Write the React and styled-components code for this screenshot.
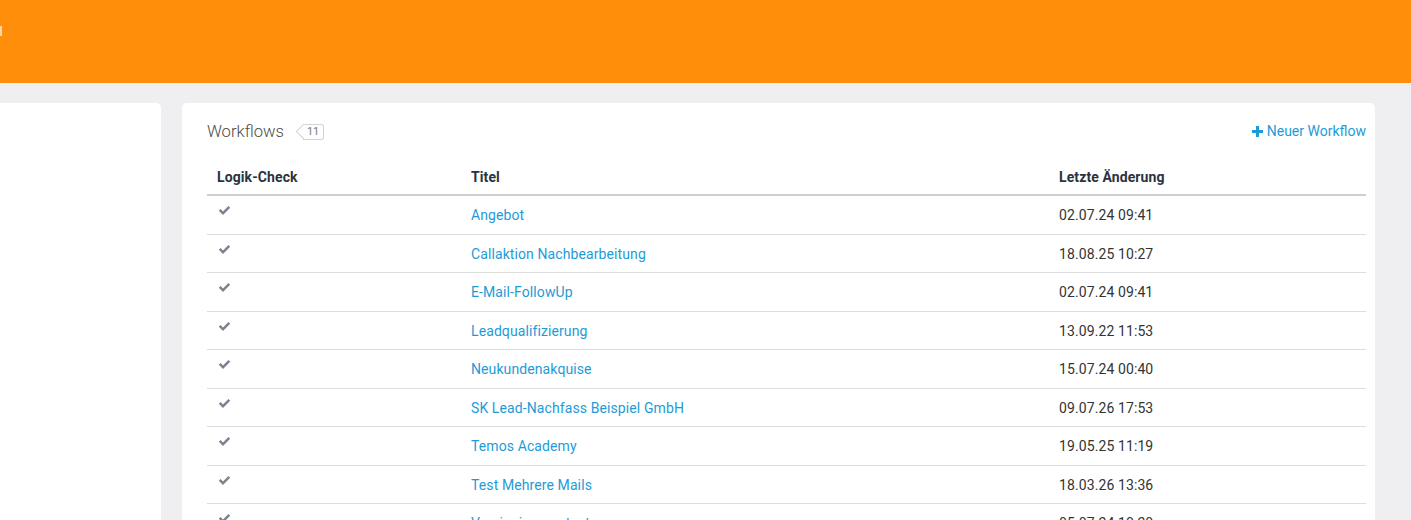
import React from "react";
import styled, { createGlobalStyle } from "styled-components";

const workflows = [
  { title: "Angebot", changed: "02.07.24 09:41" },
  { title: "Callaktion Nachbearbeitung", changed: "18.08.25 10:27" },
  { title: "E-Mail-FollowUp", changed: "02.07.24 09:41" },
  { title: "Leadqualifizierung", changed: "13.09.22 11:53" },
  { title: "Neukundenakquise", changed: "15.07.24 00:40" },
  { title: "SK Lead-Nachfass Beispiel GmbH", changed: "09.07.26 17:53" },
  { title: "Temos Academy", changed: "19.05.25 11:19" },
  { title: "Test Mehrere Mails", changed: "18.03.26 13:36" },
  { title: "Versionierungstest", changed: "05.07.24 10:20" },
];

function CheckIcon() {
  return (
    <svg width="13" height="11" viewBox="0 0 13 11">
      <path
        d="M0.8 5.8 L2.6 4 L5 6.4 L10.4 1 L12.2 2.8 L5 10 Z"
        fill="#7b8391"
      />
    </svg>
  );
}

function PlusIcon() {
  return (
    <svg width="11" height="11" viewBox="0 0 11 11">
      <path d="M4 0 H7 V4 H11 V7 H7 V11 H4 V7 H0 V4 H4 Z" fill="#1e9bd7" />
    </svg>
  );
}

export default function App() {
  return (
    <>
      <GlobalStyle />
      <TopBar>
        <Stub />
      </TopBar>
      <Content>
        <SideCard />
        <Card>
          <CardHead>
            <TitleGroup>
              <Title>Workflows</Title>
              <CountBadge>
                <span>11</span>
              </CountBadge>
            </TitleGroup>
            <NewLink>
              <PlusIcon />
              Neuer Workflow
            </NewLink>
          </CardHead>
          <Table>
            <colgroup>
              <col style={{ width: 254 }} />
              <col style={{ width: 588 }} />
              <col />
            </colgroup>
            <thead>
              <tr>
                <Th>Logik-Check</Th>
                <Th>Titel</Th>
                <Th>Letzte Änderung</Th>
              </tr>
            </thead>
            <tbody>
              {workflows.map((w) => (
                <tr key={w.title}>
                  <Td $icon>
                    <CheckIcon />
                  </Td>
                  <Td>
                    <TitleLink href="#">{w.title}</TitleLink>
                  </Td>
                  <Td>{w.changed}</Td>
                </tr>
              ))}
            </tbody>
          </Table>
        </Card>
      </Content>
    </>
  );
}

const GlobalStyle = createGlobalStyle`
  body {
    margin: 0;
    background: #efeff1;
    font-family: Roboto, "Liberation Sans", sans-serif;
    overflow: hidden;
  }
`;

const TopBar = styled.div`
  height: 83px;
  background: #ff8f0b;
  display: flex;
  align-items: flex-start;
`;

const Stub = styled.span`
  width: 2px;
  height: 10px;
  margin-top: 26px;
  background: #ffd7a6;
`;

const Content = styled.div`
  display: flex;
  gap: 21px;
  padding: 20px 36px 0 0;
  align-items: flex-start;
`;

const SideCard = styled.div`
  width: 171px;
  margin-left: -10px;
  height: 600px;
  background: #fff;
  border-radius: 5px;
  flex-shrink: 0;
`;

const Card = styled.div`
  flex: 1;
  background: #fff;
  border-radius: 5px;
  padding: 18px 9px 0 25px;
  height: 600px;
`;

const CardHead = styled.div`
  display: flex;
  justify-content: space-between;
  align-items: center;
  height: 20px;
  margin-bottom: 17px;
`;

const TitleGroup = styled.div`
  display: flex;
  align-items: center;
  gap: 19px;
`;

const Title = styled.span`
  font-size: 16.6px;
  font-weight: 300;
  color: #4a4a4a;
`;

const CountBadge = styled.span`
  position: relative;
  font-size: 11px;
  color: #7a7a7a;
  border: 1px solid #d2d2d2;
  border-left: none;
  border-radius: 0 3px 3px 0;
  padding: 0 4px 0 4px;
  height: 14px;
  line-height: 14px;
  margin-top: 1px;

  &::before {
    content: "";
    position: absolute;
    left: -5px;
    top: 1px;
    width: 10px;
    height: 10px;
    border-left: 1px solid #d2d2d2;
    border-bottom: 1px solid #d2d2d2;
    transform: rotate(45deg);
    background: #fff;
  }

  span {
    position: relative;
  }
`;

const NewLink = styled.a`
  display: flex;
  align-items: center;
  gap: 4px;
  font-size: 14px;
  color: #1e9bd7;
  text-decoration: none;
`;

const Table = styled.table`
  width: 100%;
  border-collapse: collapse;
  table-layout: fixed;
  font-size: 14px;
  letter-spacing: 0.1px;
`;

const Th = styled.th`
  text-align: left;
  font-weight: 700;
  color: #2c3340;
  padding: 10px 10px 8px;
  line-height: 18px;
  border-bottom: 2px solid #cfcfcf;
`;

const Td = styled.td`
  padding: ${(p) => (p.$icon ? "9px 10px 8px 11px" : "11px 10px 9px")};
  line-height: ${(p) => (p.$icon ? "20.5px" : "17.5px")};
  vertical-align: ${(p) => (p.$icon ? "top" : "middle")};
  color: #333;
  border-top: 1px solid #dedede;

  svg {
    display: block;
  }
`;

const TitleLink = styled.a`
  color: #1e9bd7;
  text-decoration: none;
`;
